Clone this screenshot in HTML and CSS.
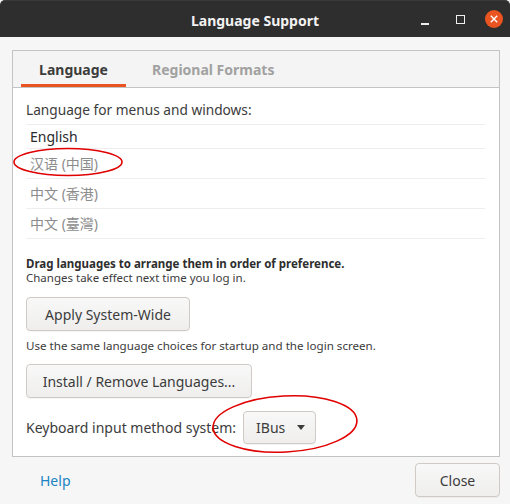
FILE: index.html
```html
<!DOCTYPE html>
<html>
<head>
<meta charset="utf-8">
<link rel="stylesheet" href="styles.css">
</head>
<body>
<div class="window">
  <header class="titlebar">
    <div class="title">Language Support</div>
    <div class="controls">
      <span class="ctl ctl-min"></span>
      <span class="ctl ctl-max"></span>
      <span class="ctl ctl-close">
        <svg width="18" height="18" viewBox="0 0 18 18"><circle cx="9" cy="9" r="9" fill="#e95420"/><path d="M5.8 5.8 L12.2 12.2 M12.2 5.8 L5.8 12.2" stroke="#fff" stroke-width="1.4"/></svg>
      </span>
    </div>
  </header>
  <main class="content">
    <div class="notebook">
      <div class="tabs">
        <div class="tab active">Language</div>
        <div class="tab">Regional Formats</div>
      </div>
      <div class="page">
        <div class="label">Language for menus and windows:</div>
        <ul class="langs">
          <li class="lang first">English</li>
          <li class="lang dim">汉语 (中国)</li>
          <li class="lang dim">中文 (香港)</li>
          <li class="lang dim">中文 (臺灣)</li>
        </ul>
        <div class="hint">
          <span class="hint-line strong">Drag languages to arrange them in order of preference.</span>
          <span class="hint-line">Changes take effect next time you log in.</span>
        </div>
        <button class="btn btn-apply">Apply System-Wide</button>
        <p class="note">Use the same language choices for startup and the login screen.</p>
        <button class="btn btn-install">Install / Remove Languages...</button>
        <div class="im-row">
          <span class="im-label">Keyboard input method system:</span>
          <button class="btn combo">IBus<span class="arrow"></span></button>
        </div>
      </div>
    </div>
    <div class="actions">
      <a class="help">Help</a>
      <button class="btn btn-close">Close</button>
    </div>
  </main>
  <svg class="mark mark-1" width="112" height="32" viewBox="0 0 112 32"><ellipse cx="56" cy="16" rx="54" ry="13.5" fill="none" stroke="#e00000" stroke-width="1.6"/></svg>
  <svg class="mark mark-2" width="150" height="62" viewBox="0 0 150 62"><ellipse cx="75" cy="31" rx="72" ry="28" fill="none" stroke="#e00000" stroke-width="1.6" transform="rotate(-3 75 31)"/></svg>
</div>
</body>
</html>
```
FILE: styles.css
```css
* { box-sizing: border-box; }
html, body { margin: 0; padding: 0; }
body {
  width: 510px;
  height: 504px;
  background: #f6f6f6;
  font-family: "Noto Sans", "Noto Sans CJK SC", sans-serif;
  color: #3c3c3c;
  overflow: hidden;
}
.window {
  position: relative;
  width: 510px;
  height: 504px;
  display: flex;
  flex-direction: column;
}
.titlebar {
  position: relative;
  height: 37px;
  background: #2f2e2e;
  border-top: 1px solid #3b3a3a;
  border-radius: 5px 5px 0 0;
  display: flex;
  align-items: center;
  justify-content: center;
  flex: none;
}
.title {
  color: #f2f2f2;
  font-weight: bold;
  font-size: 14px;
  margin-top: 2px;
}
.controls {
  position: absolute;
  right: 7px;
  top: 9px;
  display: flex;
  align-items: center;
}
.ctl { display: block; }
.ctl-min {
  width: 8px;
  height: 1.5px;
  background: #eee;
  margin-top: 10px;
  margin-right: 27px;
}
.ctl-max {
  width: 9px;
  height: 9px;
  border: 1.5px solid #eee;
  margin-right: 20px;
}
.ctl-close { width: 18px; height: 18px; }
.ctl-close svg { display: block; }

.content {
  flex: 1;
  padding: 13px 10px 0 12px;
  display: flex;
  flex-direction: column;
}
.notebook {
  border: 1px solid #c3c3c3;
  height: 407px;
  background: #fff;
  display: flex;
  flex-direction: column;
}
.tabs {
  height: 37px;
  background: #f4f4f4;
  border-bottom: 1px solid #c3c3c3;
  display: flex;
  padding-left: 8px;
  gap: 7px;
  flex: none;
}
.tab {
  padding: 0 19px;
  font-weight: bold;
  font-size: 14px;
  color: #a1a1a1;
  display: flex;
  align-items: center;
  padding-top: 1px;
}
.tab.active {
  color: #3c3c3c;
  border-bottom: 3px solid #e95420;
  width: 105px;
  justify-content: center;
  padding-top: 4px;
}
.page {
  padding: 0 14px 0 13px;
  display: flex;
  flex-direction: column;
  align-items: flex-start;
}
.label {
  font-size: 13.7px;
  line-height: 20px;
  margin-top: 12px;
}
.langs {
  list-style: none;
  margin: 4px 0 0;
  padding: 0;
  align-self: stretch;
  border-top: 1px solid #eeeeee;
}
.lang {
  height: 30px;
  line-height: 29px;
  border-bottom: 1px solid #eeeeee;
  font-size: 14px;
  padding-left: 4px;
  color: #2a2a2a;
}
.lang.first { height: 24px; line-height: 23px; }
.lang.dim { color: #8c8c8c; }
.hint {
  margin-top: 18px;
  display: flex;
  flex-direction: column;
  font-size: 11.5px;
}
.hint-line { line-height: 14px; height: 14px; white-space: nowrap; }
.hint-line.strong { font-weight: bold; color: #2e2e2e; }
.btn {
  font-family: inherit;
  font-size: 14px;
  color: #3c3c3c;
  background: linear-gradient(#f8f8f8, #efeeed);
  border: 1px solid #cfcac5;
  border-radius: 4px;
  padding: 0;
  height: 34px;
  box-shadow: 0 1px 0 rgba(0,0,0,0.04);
}
.btn-apply { margin-top: 12px; width: 164px; }
.note {
  margin: 8px 0 0;
  font-size: 11.6px;
  line-height: 14px;
}
.btn-install { margin-top: 11px; width: 226px; }
.im-row {
  margin-top: 13px;
  display: flex;
  align-items: center;
  gap: 7px;
}
.im-label {
  font-size: 14px;
  line-height: 20px;
}
.combo {
  width: 73px;
  height: 33px;
  display: flex;
  align-items: center;
  padding-left: 12px;
}
.arrow {
  width: 0;
  height: 0;
  border-left: 4.5px solid transparent;
  border-right: 4.5px solid transparent;
  border-top: 5px solid #3c3c3c;
  margin-left: 12px;
}
.actions {
  display: flex;
  justify-content: space-between;
  align-items: center;
  margin-top: 6px;
  padding-left: 28px;
}
.help {
  color: #1a84c3;
  font-size: 14px;
}
.btn-close { width: 85px; height: 34px; }
.mark { position: absolute; pointer-events: none; }
.mark-1 { left: 12px; top: 146px; }
.mark-2 { left: 210px; top: 393px; }
```
